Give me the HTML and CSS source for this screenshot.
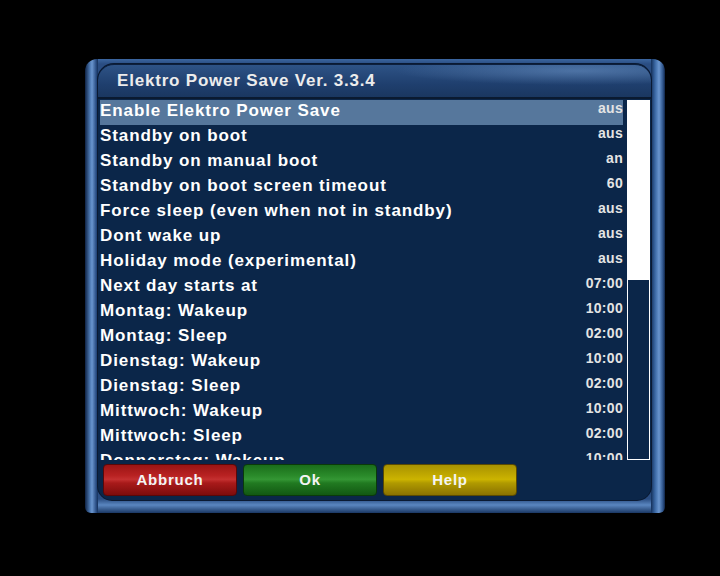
FILE: index.html
```html
<!DOCTYPE html>
<html>
<head>
<meta charset="utf-8">
<link rel="stylesheet" href="styles.css">
</head>
<body>
<div class="frame">
  <div class="panel">
    <div class="title">Elektro Power Save Ver. 3.3.4</div>
    <div class="body">
      <div class="list">
        <div class="row sel"><span class="name">Enable Elektro Power Save</span><span class="val">aus</span></div>
        <div class="row"><span class="name">Standby on boot</span><span class="val">aus</span></div>
        <div class="row"><span class="name">Standby on manual boot</span><span class="val">an</span></div>
        <div class="row"><span class="name">Standby on boot screen timeout</span><span class="val">60</span></div>
        <div class="row"><span class="name">Force sleep (even when not in standby)</span><span class="val">aus</span></div>
        <div class="row"><span class="name">Dont wake up</span><span class="val">aus</span></div>
        <div class="row"><span class="name">Holiday mode (experimental)</span><span class="val">aus</span></div>
        <div class="row"><span class="name">Next day starts at</span><span class="val">07:00</span></div>
        <div class="row"><span class="name">Montag: Wakeup</span><span class="val">10:00</span></div>
        <div class="row"><span class="name">Montag: Sleep</span><span class="val">02:00</span></div>
        <div class="row"><span class="name">Dienstag: Wakeup</span><span class="val">10:00</span></div>
        <div class="row"><span class="name">Dienstag: Sleep</span><span class="val">02:00</span></div>
        <div class="row"><span class="name">Mittwoch: Wakeup</span><span class="val">10:00</span></div>
        <div class="row"><span class="name">Mittwoch: Sleep</span><span class="val">02:00</span></div>
        <div class="row"><span class="name">Donnerstag: Wakeup</span><span class="val">10:00</span></div>
      </div>
      <div class="scroll"><div class="thumb"></div></div>
    </div>
    <div class="buttons">
      <div class="btn red">Abbruch</div>
      <div class="btn green">Ok</div>
      <div class="btn yellow">Help</div>
    </div>
  </div>
</div>
</body>
</html>
```

FILE: styles.css
```css
html, body {
  margin: 0;
  padding: 0;
  background: #000;
  width: 720px;
  height: 576px;
  overflow: hidden;
}
body {
  padding: 59px 0 0 85px;
  box-sizing: border-box;
  font-family: "Liberation Sans", Arial, sans-serif;
  font-weight: bold;
}
.frame {
  width: 580px;
  height: 454px;
  box-sizing: border-box;
  padding: 5px 14px 13px 13px;
  border-radius: 12px 12px 6px 6px;
  background:
    linear-gradient(90deg, #0f2345 0, #4d79b3 5px, #6a96cf 7px, #2b4f86 11px, #14305a 13px, transparent 13px, transparent 566px, #14305a 566px, #3a67a3 570px, #6a96cf 574px, #2d5288 578px, #0f2345 580px),
    linear-gradient(180deg, #3b66a0 0, #2a4d82 5px, #2a4d82 440px, #5a86c0 446px, #1a3763 454px);
}
.panel {
  width: 553px;
  height: 436px;
  background: #0b2649;
  border-radius: 16px 16px 14px 14px;
  overflow: hidden;
  box-shadow: 0 0 0 1px #0a1a33;
}
.title {
  box-sizing: border-box;
  height: 35px;
  line-height: 31px;
  padding-left: 19px;
  color: #ececec;
  font-size: 17px;
  letter-spacing: 0.8px;
  border-bottom: 2px solid #0a1a30;
  border-top: 1px solid #0d1f3c;
  border-radius: 16px 16px 0 0;
  background:
    radial-gradient(ellipse 260px 20px at 480px 6px, rgba(120,160,210,0.45), transparent 70%),
    linear-gradient(180deg, #2e5386 0, #1f3f6e 60%, #1a3760 100%);
}
.body {
  display: flex;
  padding-top: 1px;
  height: 361px;
  box-sizing: border-box;
}
.list {
  margin-left: 2px;
  width: 523px;
  height: 360px;
  overflow: hidden;
}
.row {
  display: flex;
  justify-content: space-between;
  align-items: flex-start;
  height: 25px;
  color: #fff;
}
.row.sel {
  background: #56779c;
}
.name {
  font-size: 17px;
  letter-spacing: 0.9px;
  line-height: 21px;
  white-space: nowrap;
}
.val {
  font-size: 14px;
  letter-spacing: 0.3px;
  line-height: 17px;
  color: #e4e4e4;
}
.scroll {
  margin-left: 4px;
  width: 23px;
  height: 360px;
  box-sizing: border-box;
  border: 1px solid #fff;
}
.thumb {
  height: 179px;
  background: #fff;
}
.buttons {
  display: flex;
  gap: 6px;
  padding: 4px 0 0 5px;
}
.btn {
  width: 134px;
  height: 32px;
  box-sizing: border-box;
  border-radius: 4px;
  color: #f4f4f4;
  font-size: 15px;
  letter-spacing: 0.75px;
  line-height: 29px;
  text-align: center;
}
.red {
  background: linear-gradient(180deg, #9c1414 0, #b82222 35%, #c43030 48%, #a81a1a 60%, #7e0c0c 100%);
  border: 1px solid #5a0808;
}
.green {
  background: linear-gradient(180deg, #1a6e1a 0, #2a8a2a 35%, #349634 48%, #217a21 60%, #125812 100%);
  border: 1px solid #0a3a0a;
}
.yellow {
  background: linear-gradient(180deg, #a89200 0, #c2aa00 35%, #ccb400 48%, #b09a00 60%, #8a7200 100%);
  border: 1px solid #5a4a00;
}
```
